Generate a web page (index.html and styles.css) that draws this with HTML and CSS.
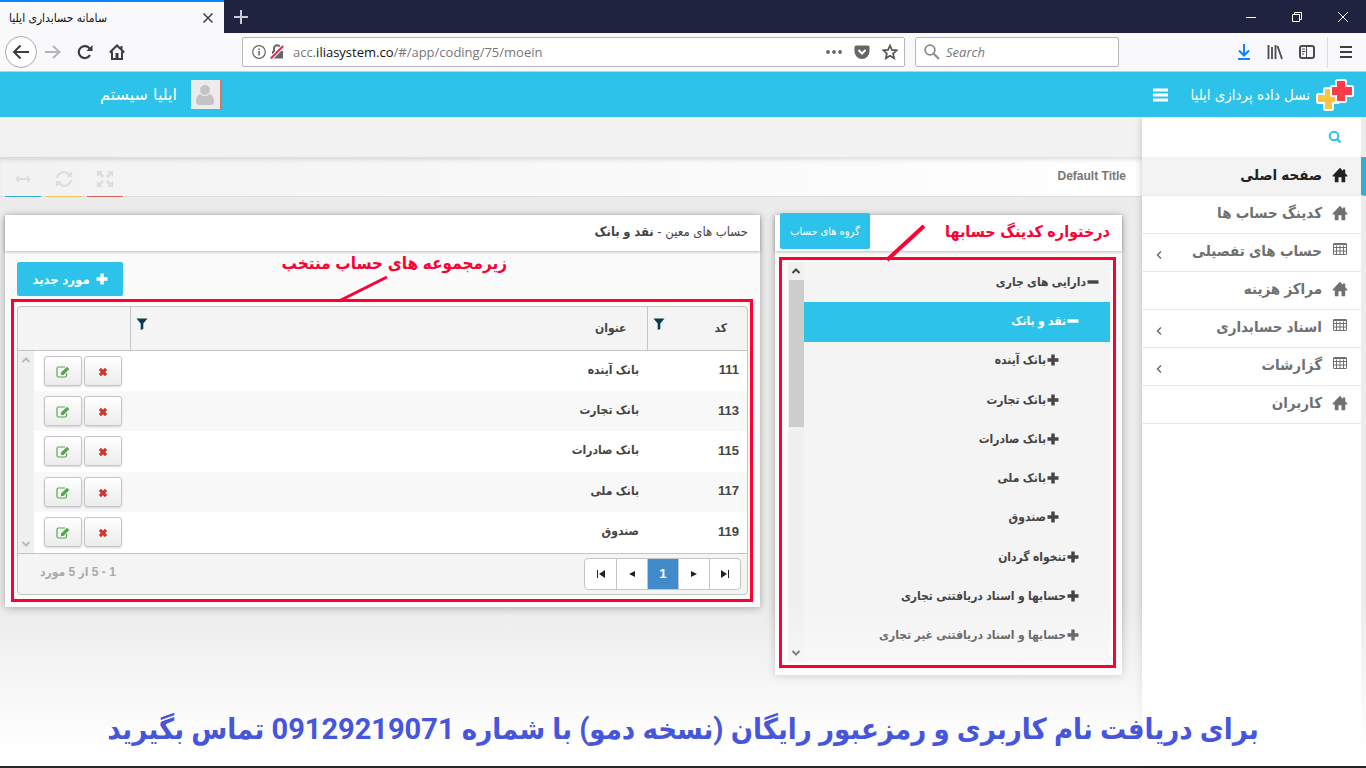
FILE: index.html
```html
<!DOCTYPE html>
<html lang="fa">
<head>
    <meta charset="utf-8">
    <title>سامانه حسابداری ایلیا</title>
    <link rel="stylesheet" href="styles.css">
</head>
<body>
    <!-- icons -->
    <svg class="sprite" width="0" height="0">
        <symbol id="home" viewBox="0 0 16 16"><path d="M8 .8L.6 8.600V9.500H2.800V15.200H6.500V10.300H9.500V15.200H13.200V9.500H15.400V8.600L13.200 6.300V2.500H11V4Z"/></symbol>
        <symbol id="table" viewBox="0 0 14 12"><path d="M1 .5H13Q13.500 .5 13.500 1V11Q13.500 11.500 13 11.500H1Q.5 11.500 .5 11V1Q.5 .5 1 .5ZM.5 1.500H13.500M.5 4.500H13.500M.5 8H13.500M3.500 2.500V11.500M7 2.500V11.500M10.500 2.500V11.500" fill="none" stroke="currentColor"/></symbol>
        <symbol id="search" viewBox="0 0 14 14"><circle cx="6" cy="6" r="4.300" fill="none" stroke="currentColor" stroke-width="2"/><path d="M9 9L12.500 12.500" stroke="currentColor" stroke-width="2.400"/></symbol>
        <symbol id="plus" viewBox="0 0 12 12"><path d="M4.300 .5H7.700V4.300H11.500V7.700H7.700V11.500H4.300V7.700H.5V4.300H4.300Z"/></symbol>
        <symbol id="minus" viewBox="0 0 12 12"><path d="M.5 4.300H11.500V7.700H.5Z"/></symbol>
        <symbol id="edit" viewBox="0 0 14 12"><path d="M10.500 7V9.500Q10.500 11 9 11H2.500Q1 11 1 9.500V2.500Q1 1 2.500 1H9" fill="none" stroke="currentColor" stroke-width="1.200"/><path d="M5 9V6.500L11 .7L13.300 3L7.500 9Z"/></symbol>
        <symbol id="remove" viewBox="0 0 10 10"><path d="M.8 3L3 .8L5 2.800L7 .8L9.200 3L7.200 5L9.200 7L7 9.200L5 7.200L3 9.200L.8 7L2.800 5Z"/></symbol>
        <symbol id="filter" viewBox="0 0 12 12"><path d="M.5 .5H11.500L7.300 5.500V11L4.700 12V5.500Z"/></symbol>
        <symbol id="up" viewBox="0 0 10 8"><path d="M1.500 6L5 2.500L8.500 6" fill="none" stroke="currentColor" stroke-width="2"/></symbol>
        <symbol id="down" viewBox="0 0 10 8"><path d="M1.500 2L5 5.500L8.500 2" fill="none" stroke="currentColor" stroke-width="2"/></symbol>
        <symbol id="arrow" viewBox="0 0 6 8"><path d="M5 .5L1.500 4L5 7.500" fill="none" stroke="currentColor" stroke-width="1.500"/></symbol>
    </svg>

    <div class="tabbar">
        <div class="tab">
            <span dir="rtl">سامانه حسابداری ایلیا</span>
            <button class="icon-btn" aria-label="Close tab"><svg width="12" height="12" viewBox="0 0 12 12"><path d="M1.500 1.500L10.500 10.500M10.500 1.500L1.500 10.500" stroke="#444" stroke-width="1.600"/></svg></button>
        </div>
        <button class="icon-btn new-tab" aria-label="New tab"><svg width="14" height="14" viewBox="0 0 14 14"><path d="M7 0V14M0 7H14" stroke="#ccccd8" stroke-width="2"/></svg></button>
        <div class="window-buttons">
            <button class="icon-btn" aria-label="Minimize"><svg width="10" height="10" viewBox="0 0 10 10"><path d="M0 5.500H10" stroke="#fff"/></svg></button>
            <button class="icon-btn" aria-label="Restore"><svg class="outline" width="10" height="10" viewBox="0 0 10 10"><path d="M.5 2.500H7.500V9.500H.5ZM2.500 2.500V.5H9.500V7.500H7.500" stroke="#fff"/></svg></button>
            <button class="icon-btn" aria-label="Close"><svg width="10" height="10" viewBox="0 0 10 10"><path d="M0 0L10 10M10 0L0 10" stroke="#fff"/></svg></button>
        </div>
    </div>

    <div class="toolbar">
        <div class="nav-buttons">
            <button class="icon-btn back" aria-label="Back"><svg width="18" height="16" viewBox="0 0 18 16"><path d="M17 8H2M8.500 1.500L2 8L8.500 14.500" fill="none" stroke="#3d3d3f" stroke-width="2"/></svg></button>
            <button class="icon-btn" aria-label="Forward"><svg width="16" height="16" viewBox="0 0 16 16"><path d="M0 8H14M8 2L14.500 8L8 14" fill="none" stroke="#b5b5b7" stroke-width="2"/></svg></button>
            <button class="icon-btn" aria-label="Reload"><svg width="16" height="16" viewBox="0 0 16 16"><path d="M13 11A6 6 0 1 1 13 5.200" fill="none" stroke="#3d3d3f" stroke-width="2.200"/><path d="M15.500 1V7H9.500Z" fill="#3d3d3f"/></svg></button>
            <button class="icon-btn" aria-label="Home"><svg width="16" height="16" viewBox="0 0 16 16"><path d="M.8 8.500L8 1.500L15.200 8.500M3 7.500V15H13V7.500M12.500 5V2" fill="none" stroke="#3d3d3f" stroke-width="2"/><path d="M6.500 9H9.500V15H6.500Z" fill="#3d3d3f"/></svg></button>
        </div>
        <div class="urlbar">
            <svg width="14" height="14" viewBox="0 0 14 14"><circle cx="7" cy="7" r="6.300" fill="none" stroke="#666" stroke-width="1.200"/><path d="M6.200 6H7.800V10.500H6.200ZM6.200 3.400H7.800V5H6.200Z" fill="#666"/></svg>
            <svg width="14" height="16" viewBox="0 0 14 16"><path d="M4 8V4.500A3.200 3.200 0 0 1 10.400 4.500V8" fill="none" stroke="#666" stroke-width="2"/><path d="M2 7H13V14.500H2Z" fill="#666"/><path d="M.8 14.500L13.200 2" stroke="#fff" stroke-width="4"/><path d="M.8 14.500L13.200 2" stroke="#e22850" stroke-width="2"/></svg>
            <span class="url">acc.<b>iliasystem.co</b>/#/app/coding/75/moein</span>
            <svg width="16" height="16" viewBox="0 0 16 16"><circle cx="2" cy="8" r="1.900"/><circle cx="8" cy="8" r="1.900"/><circle cx="14" cy="8" r="1.900"/></svg>
            <svg width="16" height="16" viewBox="0 0 16 16"><path d="M2 1.500H14Q15.500 1.500 15.500 3V7.500A7.500 7.500 0 0 1 .5 7.500V3Q.5 1.500 2 1.500Z"/><path d="M4.500 6L8 9.500L11.500 6" fill="none" stroke="#fff" stroke-width="2"/></svg>
            <svg width="16" height="16" viewBox="0 0 16 16"><path d="M8 1.500L9.900 5.900L14.700 6.300L11.100 9.500L12.200 14.300L8 11.800L3.800 14.300L4.900 9.500L1.300 6.300L6.100 5.900Z" fill="none" stroke="#555" stroke-width="1.700"/></svg>
        </div>
        <div class="searchbar">
            <svg width="16" height="16" viewBox="0 0 16 16"><circle cx="6" cy="6" r="4.800" fill="none" stroke="#8a8a8c" stroke-width="1.800"/><path d="M9.500 9.500L15 15" stroke="#8a8a8c" stroke-width="2"/></svg>
            <input type="text" placeholder="Search" aria-label="Search">
        </div>
        <div class="toolbar-end">
            <button class="icon-btn" aria-label="Downloads"><svg width="14" height="16" viewBox="0 0 14 16"><path d="M7 0V11M2 6.500L7 11.500L12 6.500M1 15H13" fill="none" stroke="#0a84ff" stroke-width="2"/></svg></button>
            <button class="icon-btn" aria-label="Library"><svg width="16" height="16" viewBox="0 0 16 16"><path d="M1.500 1V15M5 3V15M8.500 1V15M10.500 2L15 15" stroke="#4a4a4f" stroke-width="1.800"/></svg></button>
            <button class="icon-btn" aria-label="Sidebars"><svg width="16" height="14" viewBox="0 0 16 14"><rect x="1" y="1" width="14" height="12" rx="2" fill="none" stroke="#4a4a4f" stroke-width="2"/><path d="M7.500 1V13M3 4H6M3 6.500H6M3 9H5" stroke="#4a4a4f"/></svg></button>
            <span class="divider"></span>
            <button class="icon-btn" aria-label="Menu"><svg width="12" height="14" viewBox="0 0 12 14"><path d="M0 2H12M0 7H12M0 12H12" stroke="#3d3d3f" stroke-width="2"/></svg></button>
        </div>
    </div>

    <div class="app" dir="rtl">
        <header class="app-header">
            <svg class="logo" width="40" height="34" viewBox="0 0 40 34">
                <path d="M10.500 10H16.500Q18 10 18 11.500V16H22.500Q24 16 24 17.500V23.500Q24 25 22.500 25H18V30.500Q18 32 16.500 32H10.500Q9 32 9 30.500V25H3.500Q2 25 2 23.500V17.500Q2 16 3.500 16H9V11.500Q9 10 10.500 10Z" fill="#fbc53d" stroke="#fff" stroke-width="2"/>
                <path d="M22.500 2H29.500Q31 2 31 3.500V8H36.500Q38 8 38 9.500V16.500Q38 18 36.500 18H31V22.500Q31 24 29.500 24H22.500Q21 24 21 22.500V18H17.500Q16 18 16 16.500V9.500Q16 8 17.500 8H21V3.500Q21 2 22.500 2Z" fill="#fd3c4b" stroke="#fff" stroke-width="2"/>
            </svg>
            <span class="brand">نسل داده پردازی ایلیا</span>
            <button class="icon-btn burger" aria-label="منو"><svg width="15" height="14" viewBox="0 0 15 14"><path d="M0 2H15M0 7H15M0 12H15" stroke="#fff" stroke-width="3"/></svg></button>
            <div class="user">
                <span class="avatar"><svg width="20" height="22" viewBox="0 0 20 22"><circle cx="10" cy="6" r="5"/><path d="M5 10Q10 14 15 10Q19 12 19 17Q19 21 16 21H4Q1 21 1 17Q1 12 5 10Z"/></svg></span>
                <span>ایلیا سیستم</span>
            </div>
        </header>

        <div class="app-body">
            <nav class="sidebar">
                <button class="side-search" aria-label="جستجو"><svg width="14" height="14"><use href="#search"/></svg></button>
                <a href="#" class="side-item active"><svg width="16" height="16"><use href="#home"/></svg>صفحه اصلی</a>
                <a href="#" class="side-item"><svg width="16" height="16"><use href="#home"/></svg>کدینگ حساب ها</a>
                <a href="#" class="side-item"><svg class="grid-icon" width="14" height="12"><use href="#table"/></svg>حساب های تفصیلی<svg class="arrow" width="6" height="8"><use href="#arrow"/></svg></a>
                <a href="#" class="side-item"><svg width="16" height="16"><use href="#home"/></svg>مراکز هزینه</a>
                <a href="#" class="side-item"><svg class="grid-icon" width="14" height="12"><use href="#table"/></svg>اسناد حسابداری<svg class="arrow" width="6" height="8"><use href="#arrow"/></svg></a>
                <a href="#" class="side-item"><svg class="grid-icon" width="14" height="12"><use href="#table"/></svg>گزارشات<svg class="arrow" width="6" height="8"><use href="#arrow"/></svg></a>
                <a href="#" class="side-item"><svg width="16" height="16"><use href="#home"/></svg>کاربران</a>
            </nav>

            <main class="main">
                <div class="topbar"></div>
                <div class="titlebar">
                    <span class="page-title">Default Title</span>
                    <div class="tools">
                        <button class="tool red" aria-label="تمام صفحه"><svg width="18" height="18" viewBox="0 0 18 18"><path d="M1 1H7L5 3L8 6L6 8L3 5L1 7ZM17 1V7L15 5L12 8L10 6L13 3L11 1ZM1 17V11L3 13L6 10L8 12L5 15L7 17ZM17 17H11L13 15L10 12L12 10L15 13L17 11Z"/></svg></button>
                        <button class="tool yellow" aria-label="بازخوانی"><svg width="18" height="18" viewBox="0 0 18 18"><path d="M2 8A7 7 0 0 1 14 4.500M16 10A7 7 0 0 1 4 13.500" fill="none" stroke="currentColor" stroke-width="2.200"/><path d="M17 1V7H11ZM1 17V11H7Z"/></svg></button>
                        <button class="tool blue" aria-label="عرض کامل"><svg width="18" height="10" viewBox="0 0 18 10"><path d="M1 5L5 1V4H13V1L17 5L13 9V6H5V9Z"/></svg></button>
                    </div>
                </div>

                <div class="content">
                    <section class="panel tree-panel">
                        <div class="panel-head">
                            <strong class="note">درختواره کدینگ حسابها</strong>
                            <button class="btn small">گروه های حساب</button>
                            <svg class="pointer" width="42" height="38" viewBox="0 0 42 38"><path d="M2 36L39 2" stroke="#ff0032" stroke-width="4"/></svg>
                        </div>
                        <div class="mark tree-mark">
                            <ul class="tree">
                                <li class="lvl1"><svg width="12" height="12"><use href="#minus"/></svg>دارایی های جاری</li>
                                <li class="lvl2 selected"><svg width="12" height="12"><use href="#minus"/></svg>نقد و بانک</li>
                                <li class="lvl3"><svg width="12" height="12"><use href="#plus"/></svg>بانک آینده</li>
                                <li class="lvl3"><svg width="12" height="12"><use href="#plus"/></svg>بانک تجارت</li>
                                <li class="lvl3"><svg width="12" height="12"><use href="#plus"/></svg>بانک صادرات</li>
                                <li class="lvl3"><svg width="12" height="12"><use href="#plus"/></svg>بانک ملی</li>
                                <li class="lvl3"><svg width="12" height="12"><use href="#plus"/></svg>صندوق</li>
                                <li class="lvl2"><svg width="12" height="12"><use href="#plus"/></svg>تنخواه گردان</li>
                                <li class="lvl2"><svg width="12" height="12"><use href="#plus"/></svg>حسابها و اسناد دریافتنی تجاری</li>
                                <li class="lvl2"><svg width="12" height="12"><use href="#plus"/></svg>حسابها و اسناد دریافتنی غیر تجاری</li>
                            </ul>
                            <div class="scroll">
                                <svg width="10" height="8"><use href="#up"/></svg>
                                <div class="thumb"></div>
                                <svg width="10" height="8"><use href="#down"/></svg>
                            </div>
                        </div>
                    </section>

                    <section class="panel grid-panel">
                        <div class="panel-head">
                            <span>حساب های معین - <b>نقد و بانک</b></span>
                        </div>
                        <div class="actions">
                            <strong class="note">زیرمجموعه های حساب منتخب</strong>
                            <button class="btn"><svg width="12" height="12"><use href="#plus"/></svg>مورد جدید</button>
                            <svg class="pointer" width="52" height="28" viewBox="0 0 52 28"><path d="M2 26L50 2" stroke="#ff0032" stroke-width="3"/></svg>
                        </div>
                        <div class="mark">
                            <div class="grid">
                                <table class="grid-head">
                                    <thead>
                                        <tr>
                                            <th class="col-code"><div>کد<svg width="12" height="12"><use href="#filter"/></svg></div></th>
                                            <th><div>عنوان<svg width="12" height="12"><use href="#filter"/></svg></div></th>
                                            <th class="col-head-cmd"></th>
                                        </tr>
                                    </thead>
                                </table>
                                <div class="grid-body">
                                    <table>
                                        <tbody>
                                            <tr><td class="col-code">111</td><td>بانک آینده</td><td class="col-cmd"><button aria-label="حذف"><svg class="del" width="10" height="10"><use href="#remove"/></svg></button><button aria-label="ویرایش"><svg class="edit" width="14" height="12"><use href="#edit"/></svg></button></td></tr>
                                            <tr><td class="col-code">113</td><td>بانک تجارت</td><td class="col-cmd"><button aria-label="حذف"><svg class="del" width="10" height="10"><use href="#remove"/></svg></button><button aria-label="ویرایش"><svg class="edit" width="14" height="12"><use href="#edit"/></svg></button></td></tr>
                                            <tr><td class="col-code">115</td><td>بانک صادرات</td><td class="col-cmd"><button aria-label="حذف"><svg class="del" width="10" height="10"><use href="#remove"/></svg></button><button aria-label="ویرایش"><svg class="edit" width="14" height="12"><use href="#edit"/></svg></button></td></tr>
                                            <tr><td class="col-code">117</td><td>بانک ملی</td><td class="col-cmd"><button aria-label="حذف"><svg class="del" width="10" height="10"><use href="#remove"/></svg></button><button aria-label="ویرایش"><svg class="edit" width="14" height="12"><use href="#edit"/></svg></button></td></tr>
                                            <tr><td class="col-code">119</td><td>صندوق</td><td class="col-cmd"><button aria-label="حذف"><svg class="del" width="10" height="10"><use href="#remove"/></svg></button><button aria-label="ویرایش"><svg class="edit" width="14" height="12"><use href="#edit"/></svg></button></td></tr>
                                        </tbody>
                                    </table>
                                    <div class="scroll idle">
                                        <svg width="10" height="8"><use href="#up"/></svg>
                                        <svg width="10" height="8"><use href="#down"/></svg>
                                    </div>
                                </div>
                                <div class="pager">
                                    <div class="pages">
                                        <button aria-label="آخرین"><svg width="8" height="8" viewBox="0 0 8 8"><path d="M0 0L6 4L0 8ZM7 0H8V8H7Z"/></svg></button>
                                        <button aria-label="بعدی"><svg width="8" height="8" viewBox="0 0 8 8"><path d="M1 1L7 4L1 7Z"/></svg></button>
                                        <button class="current">1</button>
                                        <button aria-label="قبلی"><svg width="8" height="8" viewBox="0 0 8 8"><path d="M7 1L1 4L7 7Z"/></svg></button>
                                        <button aria-label="اولین"><svg width="8" height="8" viewBox="0 0 8 8"><path d="M8 0L2 4L8 8ZM0 0H1V8H0Z"/></svg></button>
                                    </div>
                                    <span class="count">1 - 5 از 5 مورد</span>
                                </div>
                            </div>
                        </div>
                    </section>
                </div>
            </main>
        </div>
    </div>

    <div class="banner" dir="rtl">برای دریافت نام کاربری و رمزعبور رایگان (نسخه دمو) با شماره 09129219071 تماس بگیرید</div>
</body>
</html>
```

FILE: styles.css
```css
* {
    box-sizing: border-box;
}
body {
    margin: 0;
    height: 100vh;
    display: flex;
    flex-direction: column;
    overflow: hidden;
    position: relative;
    font-family: "Liberation Sans", "DejaVu Sans Condensed", "DejaVu Sans", sans-serif;
    font-size: 13px;
    color: #444;
}
.sprite {
    position: absolute;
}
svg {
    flex: none;
    fill: currentColor;
}
.outline {
    fill: none;
}
button {
    font-family: inherit;
    cursor: pointer;
}
.icon-btn {
    display: flex;
    align-items: center;
    justify-content: center;
    padding: 0;
    border: none;
    background: none;
}

/* browser window */
.tabbar {
    display: flex;
    align-items: center;
    height: 33px;
    flex: none;
    background: #20233f;
}
.tab {
    display: flex;
    align-items: center;
    justify-content: space-between;
    width: 224px;
    height: 33px;
    padding: 0 10px 0 9px;
    border-top: 2px solid #0a84ff;
    background: #f9f9fb;
    color: #111;
    font-size: 12px;
}
.new-tab {
    margin-left: 10px;
}
.window-buttons {
    display: flex;
    gap: 36px;
    margin-left: auto;
    padding-right: 18px;
}
.toolbar {
    display: flex;
    align-items: center;
    height: 39px;
    flex: none;
    padding: 0 14px 0 5px;
    background: #f9f9fb;
    border-bottom: 1px solid #ccc;
}
.nav-buttons {
    display: flex;
    align-items: center;
    gap: 16px;
    width: 237px;
}
.nav-buttons .back {
    width: 32px;
    height: 32px;
    margin-right: -8px;
    border: 1px solid #aaa;
    border-radius: 50%;
    background: #fff;
}
.urlbar, .searchbar {
    display: flex;
    align-items: center;
    height: 30px;
    border: 1px solid #b8b8b8;
    border-radius: 2px;
    background: #fff;
}
.urlbar {
    flex: 1;
    gap: 12px;
    padding: 0 6px 0 9px;
    color: #666;
}
.urlbar svg:nth-child(2) {
    margin-left: -8px;
}
.url {
    flex: 1;
    margin-left: -3px;
    font-family: "Open Sans", sans-serif;
    font-size: 13px;
    color: #777;
}
.url b {
    font-weight: normal;
    color: #111;
}
.searchbar {
    width: 204px;
    gap: 6px;
    margin-left: 10px;
    padding: 0 8px;
}
.searchbar input {
    flex: 1;
    min-width: 0;
    padding: 0;
    border: none;
    font-family: "Open Sans", sans-serif;
    font-size: 13px;
}
.searchbar input::placeholder {
    color: #777;
    font-style: italic;
}
.toolbar-end {
    display: flex;
    align-items: center;
    gap: 16px;
    margin-left: 118px;
}
.divider {
    width: 1px;
    height: 31px;
    margin: 0 -4px;
    background: #ddd;
}

/* header */
.app {
    flex: 1;
    display: flex;
    flex-direction: column;
    min-height: 0;
    border-bottom: 2px solid #25272b;
}
.app-header {
    display: flex;
    align-items: center;
    position: relative;
    z-index: 2;
    height: 45px;
    flex: none;
    padding: 0 11px 0 100px;
    background: #2dc2e9;
    color: #fff;
}
.brand {
    margin-right: 5px;
    font-size: 15px;
}
.burger {
    margin-right: 22px;
}
.user {
    display: flex;
    align-items: center;
    gap: 14px;
    margin-right: auto;
    font-family: "DejaVu Sans", sans-serif;
    font-size: 16px;
}
.avatar {
    display: flex;
    align-items: center;
    justify-content: center;
    width: 31px;
    height: 29px;
    border-right: 2px solid #d87565;
    background: #ececec;
    color: #c4c4c4;
}
.app-body {
    flex: 1;
    display: flex;
    min-height: 0;
    background: #ececec;
}

/* sidebar */
.sidebar {
    width: 224px;
    flex: none;
    z-index: 1;
    border-right: 5px solid #ececec;
    background: #fff;
    box-shadow: 0 0 8px rgba(0, 0, 0, 0.2);
}
.side-search {
    display: flex;
    align-items: center;
    width: 100%;
    height: 40px;
    padding: 0 19px;
    border: none;
    background: none;
    color: #2dc2e9;
}
.side-item {
    display: flex;
    align-items: center;
    gap: 10px;
    height: 38px;
    padding: 0 13px 3px 14px;
    border-bottom: 1px solid #e9e9e9;
    color: #707070;
    font-size: 15px;
    font-weight: bold;
    text-decoration: none;
}
.side-item.active {
    height: 39px;
    margin-right: -5px;
    border-right: 5px solid #36aecb;
    background: #f3f3f3;
    color: #222;
}
.grid-icon {
    margin: -4px 1px 0;
}
.arrow {
    margin: 7px auto 0 0;
}

/* main */
.main {
    flex: 1;
    min-width: 0;
}
.topbar {
    height: 40px;
    background: #f2f2f2;
}
.titlebar {
    display: flex;
    justify-content: space-between;
    height: 40px;
    padding: 0 16px 0 5px;
    border-bottom: 1px solid #ddd;
    background: linear-gradient(to left, #fff, #f2f2f2);
    box-shadow: inset 0 5px 5px -3px rgba(0, 0, 0, 0.15);
}
.page-title {
    padding-top: 12px;
    font-size: 12px;
    font-weight: bold;
    color: #777;
}
.tools {
    display: flex;
    gap: 5px;
}
.tool {
    display: flex;
    align-items: center;
    justify-content: center;
    width: 36px;
    height: 40px;
    padding: 4px 0 0;
    border: none;
    border-bottom: 1px solid;
    background: none;
}
.tool svg {
    color: #ddd;
}
.red {
    border-color: #d96557;
}
.yellow {
    border-color: #f5c35a;
}
.blue {
    border-color: #36b0d3;
}
.content {
    display: flex;
    align-items: flex-start;
    gap: 15px;
    padding: 18px 20px 0 5px;
}
.panel {
    background: #fbfbfb;
    box-shadow: 0 1px 8px rgba(0, 0, 0, 0.3);
}
.panel-head {
    display: flex;
    align-items: center;
    justify-content: space-between;
    position: relative;
    height: 36px;
    padding: 0 12px 4px 5px;
    background: #fff;
    box-shadow: 0 1px 3px rgba(0, 0, 0, 0.25);
}
.tree-panel {
    width: 347px;
    flex: none;
    padding-bottom: 7px;
}
.grid-panel {
    flex: 1;
    min-width: 0;
    padding-bottom: 5px;
}
.note {
    color: #ff0032;
    font-size: 17px;
}
.tree-panel .note {
    font-size: 16px;
}
.pointer {
    position: absolute;
    z-index: 2;
}
.tree-panel .pointer {
    left: 110px;
    top: 9px;
}
.btn {
    display: flex;
    align-items: center;
    justify-content: center;
    gap: 6px;
    width: 106px;
    height: 34px;
    padding: 0;
    border: none;
    border-radius: 2px;
    background: #2dc2e9;
    color: #fff;
    font-size: 13px;
    font-weight: bold;
}
.btn.small {
    flex: none;
    width: 90px;
    height: 36px;
    font-size: 11px;
    font-weight: normal;
}
.mark {
    position: relative;
    margin: 0 7px 0 6px;
    padding: 7px 5px 7px 6px;
}
/* the red frame stays above the fading banner */
.mark::after {
    content: "";
    position: absolute;
    inset: 0;
    z-index: 4;
    border: 3px solid #ff0032;
    pointer-events: none;
}

/* accounts tree */
.tree-mark {
    display: flex;
    height: 411px;
    margin: 6px 6px 0 4px;
    padding: 5px 6px 6px 9px;
}
.tree {
    flex: 1;
    display: grid;
    grid-auto-rows: 1fr;
    margin: 0;
    padding: 1px 0 6px;
    list-style: none;
    background: #f4f4f4;
    font-size: 12px;
    font-weight: bold;
}
.tree li {
    display: flex;
    align-items: center;
    gap: 1px;
    padding-bottom: 2px;
}
.tree .lvl1 {
    padding-right: 11px;
}
.tree .lvl2 {
    padding-right: 31px;
}
.tree .lvl3 {
    padding-right: 51px;
}
.tree .selected {
    background: #2dc2e9;
    color: #fff;
}
.scroll {
    display: flex;
    flex-direction: column;
    align-items: center;
    gap: 5px;
    width: 16px;
    padding: 5px 0;
    background: #f0f0f0;
}
.scroll svg:last-child {
    margin-top: auto;
}
.thumb {
    width: 15px;
    height: 147px;
    background: #cdcdcd;
}
.idle {
    color: #bbb;
}

/* sub accounts grid */
.actions {
    display: flex;
    align-items: flex-start;
    justify-content: space-between;
    position: relative;
    height: 48px;
    padding: 11px 253px 0 12px;
}
.actions .note {
    margin-top: -9px;
}
.actions .pointer {
    left: 332px;
    top: 24px;
}
.grid {
    border: 1px solid #c5c5c5;
    border-radius: 4px;
    background: #f4f4f4;
}
table {
    width: 100%;
    table-layout: fixed;
    border-collapse: collapse;
    font-size: 12px;
    font-weight: bold;
}
.col-code {
    width: 100px;
}
td.col-code {
    font-size: 13px;
}
.col-head-cmd {
    width: 112px;
}
.col-cmd {
    width: 96px;
}
th {
    height: 43px;
    padding: 0 20px 0 5px;
    border-bottom: 1px solid #c5c5c5;
    border-left: 1px solid #c5c5c5;
}
th:last-child {
    border-left: none;
}
th div {
    display: flex;
    align-items: center;
    justify-content: space-between;
}
th svg {
    margin-top: -8px;
    color: #053c52;
}
.grid-body {
    display: flex;
    height: 202px;
}
.grid-body tr {
    background: #fff;
}
.grid-body tr:nth-child(even) {
    background: #f8f8f8;
}
td {
    padding: 0 8px 2px;
}
td:last-child {
    padding: 0;
    white-space: nowrap;
}
td button {
    width: 38px;
    height: 30px;
    margin: 0 8px 0 -6px;
    padding: 0;
    border: 1px solid #c5c5c5;
    border-radius: 3px;
    background: linear-gradient(#fff, #ececec);
    box-shadow: 0 1px 2px rgba(0, 0, 0, 0.15);
    vertical-align: middle;
}
td svg {
    vertical-align: middle;
}
.del {
    color: #d2342e;
}
.edit {
    color: #57a64f;
}
.pager {
    display: flex;
    align-items: center;
    justify-content: space-between;
    height: 41px;
    padding: 0 6px 0 22px;
    border-top: 1px solid #c5c5c5;
}
.pages {
    display: flex;
    border: 1px solid #c5c5c5;
    border-radius: 4px;
    background: #fff;
}
.pages button {
    width: 31px;
    height: 30px;
    padding: 0;
    border: none;
    border-left: 1px solid #c5c5c5;
    background: none;
    color: #222;
}
.pages button:last-child {
    border-left: none;
}
.pages .current {
    background: #428bca;
    color: #fff;
    font-weight: bold;
}
.count {
    padding-bottom: 3px;
    color: #aaa;
    font-size: 12px;
    font-weight: bold;
}

/* call to action over the page */
.banner {
    display: flex;
    align-items: flex-end;
    justify-content: center;
    position: absolute;
    left: 0;
    right: 0;
    bottom: 2px;
    height: 160px;
    padding-bottom: 20px;
    z-index: 3;
    pointer-events: none;
    background: linear-gradient(rgba(255, 255, 255, 0), #fff 90%);
    color: #4656dc;
    font-family: Roboto, "DejaVu Sans Condensed", "DejaVu Sans", sans-serif;
    font-size: 29px;
    font-weight: bold;
    white-space: nowrap;
}
```
